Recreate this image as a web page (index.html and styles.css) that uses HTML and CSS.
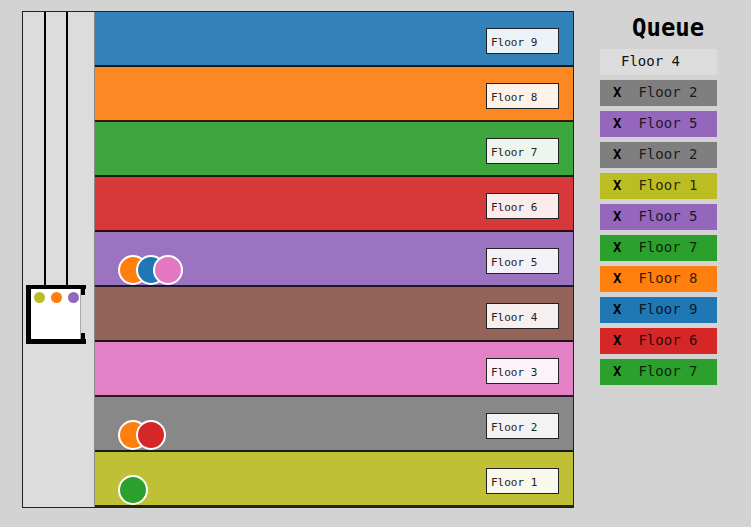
FILE: index.html
```html
<!DOCTYPE html>
<html>
<head>
<meta charset="utf-8">
<link rel="stylesheet" href="styles.css">
</head>
<body>
<div class="page">
  <div class="building">
    <div class="shaft">
      <div class="cables"><div class="cable"></div><div class="cable"></div></div>
      <div class="car">
        <div class="car-body">
          <span class="dot c-olive"></span><span class="dot c-orange"></span><span class="dot c-purple"></span>
        </div>
        <div class="car-door"><div class="tick"></div><div class="tick"></div></div>
      </div>
    </div>
    <div class="floors">
      <div class="floor f-blue"><div class="people"></div><div class="label">Floor 9</div></div>
      <div class="floor f-orange"><div class="people"></div><div class="label">Floor 8</div></div>
      <div class="floor f-green"><div class="people"></div><div class="label">Floor 7</div></div>
      <div class="floor f-red"><div class="people"></div><div class="label">Floor 6</div></div>
      <div class="floor f-purple"><div class="people"><span class="person c-orange"></span><span class="person c-blue"></span><span class="person c-pink"></span></div><div class="label">Floor 5</div></div>
      <div class="floor f-brown"><div class="people"></div><div class="label">Floor 4</div></div>
      <div class="floor f-pink"><div class="people"></div><div class="label">Floor 3</div></div>
      <div class="floor f-gray"><div class="people"><span class="person c-orange"></span><span class="person c-red"></span></div><div class="label">Floor 2</div></div>
      <div class="floor f-olive"><div class="people"><span class="person c-green"></span></div><div class="label">Floor 1</div></div>
    </div>
  </div>
  <div class="queue">
    <div class="queue-title">Queue</div>
    <div class="q-item q-current">Floor 4</div>
    <div class="q-item c-gray"><b>X</b><span class="q-floor">Floor 2</span></div>
    <div class="q-item c-purple"><b>X</b><span class="q-floor">Floor 5</span></div>
    <div class="q-item c-gray"><b>X</b><span class="q-floor">Floor 2</span></div>
    <div class="q-item c-olive"><b>X</b><span class="q-floor">Floor 1</span></div>
    <div class="q-item c-purple"><b>X</b><span class="q-floor">Floor 5</span></div>
    <div class="q-item c-green"><b>X</b><span class="q-floor">Floor 7</span></div>
    <div class="q-item c-orange"><b>X</b><span class="q-floor">Floor 8</span></div>
    <div class="q-item c-blue"><b>X</b><span class="q-floor">Floor 9</span></div>
    <div class="q-item c-red"><b>X</b><span class="q-floor">Floor 6</span></div>
    <div class="q-item c-green"><b>X</b><span class="q-floor">Floor 7</span></div>
  </div>
</div>
</body>
</html>
```

FILE: styles.css
```css
html, body {
  margin: 0;
  padding: 0;
  background: #d3d3d3;
  font-family: "DejaVu Sans Mono", monospace;
}

.page {
  display: flex;
  align-items: flex-start;
  padding: 11px 0 0 22px;
}

.building {
  display: flex;
  border: 1px solid #222;
  width: 550px;
  height: 495px;
}

.shaft {
  width: 71px;
  background: #dcdcdc;
  border-right: 1px solid #888;
  display: flex;
  flex-direction: column;
}

.cables {
  display: flex;
  height: 273px;
  padding-left: 21px;
  gap: 20px;
}

.cable {
  width: 2px;
  background: #000;
}

.car {
  display: flex;
  margin-left: 3px;
  width: 55px;
  height: 50px;
  border-left: 5px solid #000;
  border-top: 4px solid #000;
  border-bottom: 5px solid #000;
}

.car-body {
  width: 50px;
  background: #fff;
  border-right: 1px solid #aaa;
  display: flex;
  align-items: flex-start;
  gap: 6px;
  padding: 3px 0 0 3px;
  box-sizing: border-box;
}

.car-door {
  width: 4px;
  display: flex;
  flex-direction: column;
  justify-content: space-between;
}

.tick {
  height: 6px;
  background: #000;
}

.dot {
  width: 11px;
  height: 11px;
  border-radius: 50%;
  flex: none;
}

.floors {
  flex: 1;
  display: flex;
  flex-direction: column;
}

.floor {
  height: 55px;
  box-sizing: border-box;
  border-bottom: 2px solid rgba(0, 0, 0, 0.8);
  display: flex;
  align-items: flex-start;
}

.people {
  align-self: flex-end;
  display: flex;
  margin-left: 23px;
}

.person {
  width: 26px;
  height: 26px;
  border: 2px solid #fff;
  border-radius: 50%;
  flex: none;
}

.person + .person {
  margin-left: -12.5px;
}

.label {
  margin: 16px 14px 0 auto;
  width: 73px;
  height: 26px;
  box-sizing: border-box;
  border: 1px solid #222;
  background: rgba(255, 255, 255, 0.9);
  font-size: 11px;
  line-height: 13px;
  padding: 7px 0 0 4px;
  color: #222;
}

.f-blue { background: #3281b8; }
.f-orange { background: #fc8823; }
.f-green { background: #3ea63e; }
.f-red { background: #d7393a; }
.f-purple { background: #9b73c0; }
.f-brown { background: #94635a; }
.f-pink { background: #e281c5; }
.f-gray { background: #888888; }
.f-olive { background: #bfc035; }

.c-blue { background: #1f77b4; }
.c-orange { background: #ff7f0e; }
.c-green { background: #2ca02c; }
.c-red { background: #d62728; }
.c-purple { background: #9467bd; }
.c-pink { background: #e377c2; }
.c-gray { background: #7f7f7f; }
.c-olive { background: #bcbd22; }

.queue {
  margin-left: 26px;
  width: 117px;
  display: flex;
  flex-direction: column;
  gap: 5px;
}

.queue-title {
  font-size: 24px;
  font-weight: bold;
  line-height: 28px;
  margin: 3px 0 2px 32px;
  color: #000;
}

.q-item {
  height: 26px;
  line-height: 25px;
  font-size: 14px;
  padding-left: 13px;
  white-space: pre;
}

.q-item b {
  color: #000;
}

.q-floor {
  margin-left: 17px;
  color: rgba(0, 0, 0, 0.8);
}

.q-current {
  background: #dcdcdc;
  padding-left: 21px;
  color: #111;
}
```
